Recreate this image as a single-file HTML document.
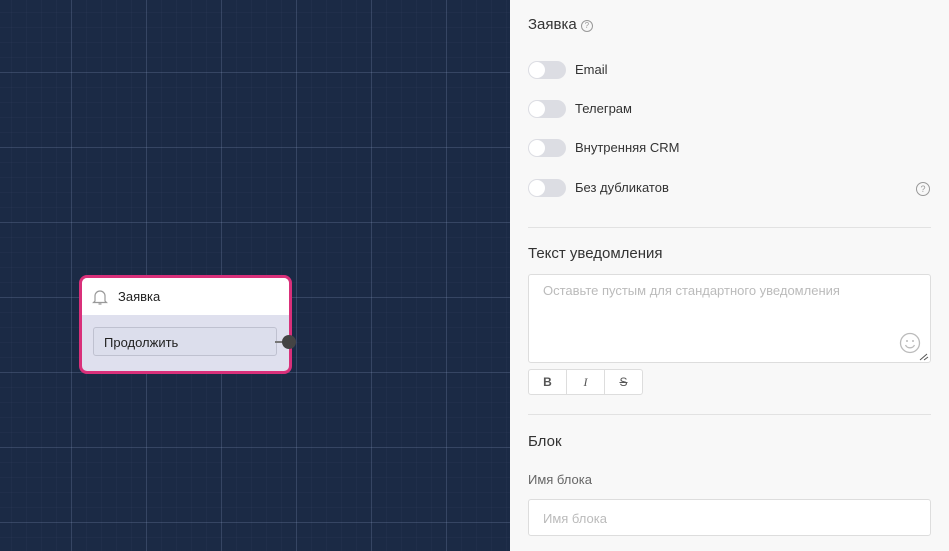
<!DOCTYPE html>
<html><head><meta charset="utf-8"><style>
body{margin:0;width:949px;height:551px;overflow:hidden;font-family:"Liberation Sans","DejaVu Sans",sans-serif;position:relative}
.canvas{position:absolute;left:0;top:0;width:510px;height:551px;background-color:#1b2a45;
background-image:linear-gradient(90deg,rgba(140,160,200,.2) 1px,transparent 1px),linear-gradient(0deg,rgba(140,160,200,.2) 1px,transparent 1px),linear-gradient(90deg,rgba(140,160,200,.04) 1px,transparent 1px),linear-gradient(0deg,rgba(140,160,200,.04) 1px,transparent 1px);
background-size:75px 75px,75px 75px,15px 15px,15px 15px;background-position:71px 73px,71px 73px,11px 13px,11px 13px}
.node{position:absolute;left:79px;top:275px;width:207px;height:93px;border:3px solid #d9307a;border-radius:8px;background:#dfe0ee;overflow:visible}
.nh{height:37px;background:#fff;border-radius:5px 5px 0 0;display:flex;align-items:center;font-size:13px;color:#222}
.btn{position:absolute;left:11px;top:49px;height:29px;border:1px solid #bfc1d0;border-radius:3px;background:#dcdeec;font-size:13px;color:#222;line-height:29px;padding-left:10px;box-sizing:border-box;width:184px}
.port{position:absolute;left:200px;top:57px;width:14px;height:14px;border-radius:50%;background:#444}
.pl{position:absolute;left:193px;top:63px;width:8px;height:2px;background:#777}
.panel{position:absolute;left:510px;top:0;width:439px;height:551px;background:#f8f8f8;color:#333}
.t{position:absolute;font-size:15px}
.tg{position:absolute;left:18px;width:38px;height:18px;border-radius:9px;background:#dcdde3}
.tg:after{content:"";position:absolute;left:1px;top:1px;width:16px;height:16px;border-radius:50%;background:#fff}
.lb{position:absolute;left:65px;font-size:13px;color:#333}
.q{display:inline-block;width:10px;height:10px;border:1px solid #999;border-radius:50%;font-size:8px;line-height:10px;text-align:center;color:#999;vertical-align:1px}
.hr{position:absolute;left:18px;width:403px;height:1px;background:#e2e2e2}
.ta{position:absolute;left:18px;top:274px;width:403px;height:89px;border:1px solid #ddd;border-radius:3px;background:#fff;box-sizing:border-box}
.fmt{position:absolute;left:18px;top:369px;width:115px;height:26px;border:1px solid #ddd;border-radius:3px;background:#fff;display:flex;box-sizing:border-box}
.fmt div{flex:1;text-align:center;line-height:24px;font-size:12px;color:#555;border-right:1px solid #ddd}
.fmt div:last-child{border:none}
.inp{position:absolute;left:18px;top:499px;width:403px;height:37px;border:1px solid #ddd;border-radius:3px;background:#fff;box-sizing:border-box;font-size:13px;color:#bbb;padding:11px 14px}
</style></head><body>
<div class="canvas"></div>
<div class="node">
 <div class="nh"><svg width="18" height="18" viewBox="0 0 18 18" style="margin:0 9px 0 9px"><path d="M4 13V8a5 5 0 0 1 10 0v5l1.5 1.5h-13z M7.5 16h3" fill="none" stroke="#999" stroke-width="1.2"/></svg>Заявка</div>
 <div class="btn">Продолжить</div>
 <div class="pl"></div><div class="port"></div>
</div>
<div class="panel">
 <div class="t" style="left:18px;top:16px">Заявка <span class="q">?</span></div>
 <div class="tg" style="top:61px"></div><div class="lb" style="top:62px">Email</div>
 <div class="tg" style="top:100px"></div><div class="lb" style="top:101px">Телеграм</div>
 <div class="tg" style="top:139px"></div><div class="lb" style="top:140px">Внутренняя CRM</div>
 <div class="tg" style="top:179px"></div><div class="lb" style="top:180px">Без дубликатов</div>
 <div style="position:absolute;left:406px;top:180px"><span class="q" style="width:12px;height:12px;line-height:12px;font-size:9px">?</span></div>
 <div class="hr" style="top:227px"></div>
 <div class="t" style="left:18px;top:245px">Текст уведомления</div>
 <div class="ta"><div style="position:absolute;left:14px;top:8px;font-size:13px;color:#bbb">Оставьте пустым для стандартного уведомления</div>
 <svg style="position:absolute;left:370px;top:57px" width="22" height="22" viewBox="0 0 22 22"><circle cx="11" cy="11" r="9.5" fill="none" stroke="#bbb" stroke-width="1.3"/><circle cx="8" cy="9" r="1" fill="#bbb"/><circle cx="14" cy="9" r="1" fill="#bbb"/><path d="M6.5 13a5 5 0 0 0 9 0" fill="none" stroke="#bbb" stroke-width="1.3"/></svg>
 <svg style="position:absolute;left:390px;top:78px" width="10" height="8"><path d="M1 7l7-6M5 7l4-3" stroke="#555"/></svg></div>
 <div class="fmt"><div style="font-weight:bold">B</div><div style="font-style:italic;font-family:'Liberation Serif',serif">I</div><div style="text-decoration:line-through">S</div></div>
 <div class="hr" style="top:414px"></div>
 <div class="t" style="left:18px;top:433px">Блок</div>
 <div style="position:absolute;left:18px;top:472px;font-size:13px;color:#666">Имя блока</div>
 <div class="inp">Имя блока</div>
</div>
</body></html>
